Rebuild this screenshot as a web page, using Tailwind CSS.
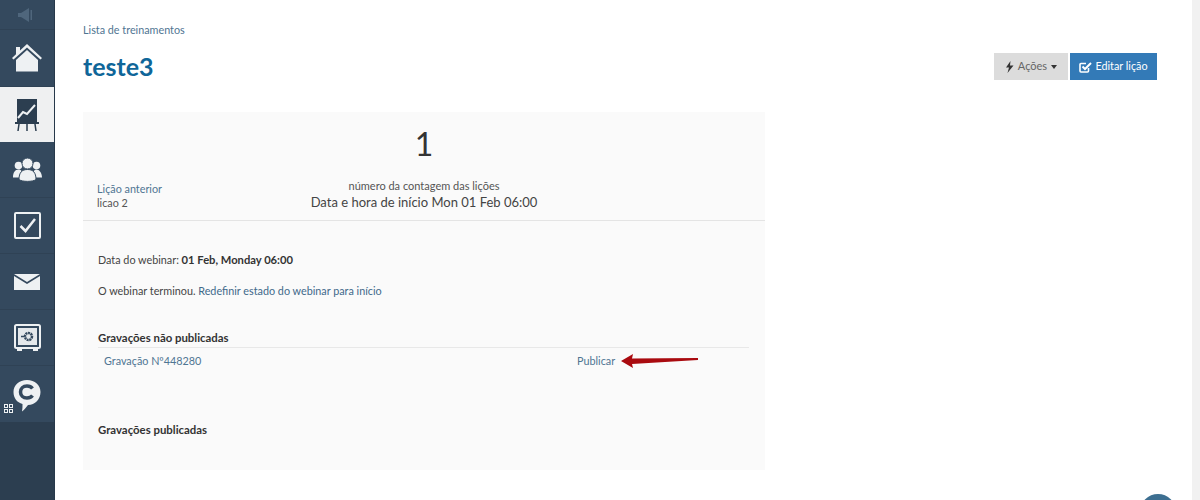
<!DOCTYPE html>
<html lang="pt">
<head>
<meta charset="UTF-8">
<title>teste3</title>
<script src="https://cdn.jsdelivr.net/npm/@tailwindcss/browser@4"></script>
</head>
<body class="font-['Lato','Liberation_Sans',sans-serif] bg-white text-[#333] overflow-hidden">
<div class="relative flex h-[500px] w-[1200px] overflow-hidden">

  <!-- sidebar -->
  <nav class="flex flex-col w-[55px] h-full shrink-0 bg-[#2c3e50] border-r border-[#27384a]">
    <a class="flex items-center justify-center h-[30px] bg-[#34495e] border-b border-[#2f4255]">
      <svg width="20" height="14" viewBox="0 0 20 14" fill="#4f667c"><path d="M1 5h3l8-5v14l-8-5H1z"/><rect x="13.500" y="2" width="1.500" height="10"/></svg>
    </a>
    <a class="flex items-center justify-center h-[57px] bg-[#34495e] border-b border-[#2f4255]">
      <svg width="30" height="28" viewBox="0 0 30 28" fill="#eef1f3"><path d="M15 0 30 14l-1.500 1.500L15 3.500 1.500 15.500 0 14 4 10.200V3h4v3.500z"/><path d="M15 6 26 16v11.500H4V16z"/></svg>
    </a>
    <a class="flex items-center justify-center h-[55px] bg-[#eff0f1]">
      <svg width="24" height="32" viewBox="0 0 24 32"><rect x="2" y="0" width="20" height="23" fill="#2c3e50"/><path d="M3 19l5-6 4 2 8-9" fill="none" stroke="#eef1f3" stroke-width="2"/><rect x="0" y="23" width="24" height="2" fill="#2c3e50"/><path d="M4 25 3 32M12 25v7M20 25l1 7" stroke="#2c3e50" stroke-width="1.500"/></svg>
    </a>
    <a class="flex items-center justify-center h-[56px] bg-[#34495e] border-b border-[#2f4255]">
      <svg width="29" height="25" viewBox="0 0 29 24" fill="#eef1f3"><circle cx="5.500" cy="8" r="3.800"/><circle cx="23.500" cy="8" r="3.800"/><path d="M0 20c0-5 2-8 5.500-8S9 14 9 20zM20 20c0-6 1-8 3.500-8S29 15 29 20z"/><circle cx="14.500" cy="6" r="5.500" stroke="#34495e"/><path d="M6 22c0-7 3-10 8.500-10S23 15 23 22c-3 2.500-14 2.500-17 0z" stroke="#34495e"/></svg>
    </a>
    <a class="flex items-center justify-center h-[56px] bg-[#34495e] border-b border-[#2f4255]">
      <svg width="27" height="27" viewBox="0 0 27 27" fill="none" stroke="#eef1f3"><rect x="1" y="1" width="25" height="25" rx="1" stroke-width="2"/><path d="M6.500 14l5 5L21 7" stroke-width="2.500"/></svg>
    </a>
    <a class="flex items-center justify-center h-[56px] bg-[#34495e] border-b border-[#2f4255]">
      <svg width="26" height="16" viewBox="0 0 26 16" fill="#eef1f3"><path d="M0 0h26L13 8z"/><path d="M0 2l13 8 13-8v14H0z"/></svg>
    </a>
    <a class="flex items-center justify-center h-[56px] bg-[#34495e] border-b border-[#2f4255]">
      <svg width="27" height="27" viewBox="0 0 27 27"><rect x="1" y="1" width="25" height="23" rx="1.500" fill="#34495e" stroke="#eef1f3" stroke-width="2"/><rect x="4" y="4" width="19" height="17" fill="#e4e8eb"/><circle cx="14.500" cy="12.500" r="3.500" fill="none" stroke="#34495e" stroke-width="2.500" stroke-dasharray="2 .6"/><path d="M7 12.500h3" stroke="#34495e" stroke-width="1.500"/><path d="M3 25h5v2H3zM19 25h5v2h-5z" fill="#eef1f3"/></svg>
    </a>
    <a class="relative flex items-start justify-center h-[56px] pt-[13px] bg-[#34495e]">
      <svg width="28" height="33" viewBox="0 0 28 33"><path d="M14 1c8 0 13.500 5 13.500 12S22 26 15 26c-1.500 2-3.500 4.500-6 6.500 .5-2.500 .5-5 .5-7.500C4 23.500 .5 19 .5 13 .5 6 6 1 14 1z" fill="#eef1f3"/><path d="M19.500 9.500C18 7.500 16 7 14 7c-4 0-6.500 2.500-6.500 6s2.500 6 6.500 6c2 0 4-.5 5.500-2.500" fill="none" stroke="#34495e" stroke-width="3.500"/></svg>
      <svg class="absolute left-[4px] top-[38px]" width="9" height="9" viewBox="0 0 9 9" fill="none" stroke="#eef1f3"><rect x=".5" y=".5" width="3" height="3"/><rect x="5.500" y=".5" width="3" height="3"/><rect x=".5" y="5.500" width="3" height="3"/><rect x="5.500" y="5.500" width="3" height="3"/></svg>
    </a>
  </nav>

  <!-- main -->
  <main class="flex-1 pl-[28px] pr-[43px] pt-[22px]">
    <p class="text-[10.8px] leading-[15px] text-[#4f7592]">Lista de treinamentos</p>
    <div class="flex items-start justify-between mt-[9px] h-[66px]">
      <h1 class="text-[25px] leading-[30px] font-bold text-[#0f6699] mt-[5px]">teste3</h1>
      <div class="flex gap-[2px] mt-[7px]">
        <button class="flex items-center gap-[4px] h-[27px] w-[74px] justify-center bg-[#dcdcdc] text-[11px] text-[#666]">
          <svg width="9" height="12" viewBox="0 0 9 12" fill="#333"><path d="M5.500 0 1 6.500h3L2.500 12 8.500 4.500H5z"/></svg>
          Ações
          <span class="w-0 h-0 border-x-[3.500px] border-x-transparent border-t-[4px] border-t-[#333]"></span>
        </button>
        <button class="flex items-center gap-[3px] h-[27px] w-[87px] justify-center bg-[#337ab7] text-[10.8px] text-white">
          <svg width="13" height="12" viewBox="0 0 13 12" fill="none" stroke="#fff"><path d="M9.500 7v3a1 1 0 0 1-1 1H2a1 1 0 0 1-1-1V3.500a1 1 0 0 1 1-1h5" stroke-width="1.600"/><path d="M3.500 5.500l2.500 2.500 6-6" stroke-width="2"/></svg>
          Editar lição
        </button>
      </div>
    </div>

    <section class="w-[682px] h-[358px] bg-[#fafafa]">
      <div class="relative h-[109px] border-b border-[#e4e4e4] pt-[12px] text-center">
        <div class="text-[32px] leading-[40px] text-[#333]">1</div>
        <p class="mt-[14px] text-[11px] leading-[15px] text-[#555]">número da contagem das lições</p>
        <p class="mt-[0px] text-[13px] leading-[18px] text-[#444]">Data e hora de início Mon 01 Feb 06:00</p>
        <div class="absolute left-[14px] top-[70px] text-left text-[10.8px] leading-[14px]">
          <a class="block text-[#4f7592]">Lição anterior</a>
          <span class="block text-[#555]">licao 2</span>
        </div>
      </div>

      <div class="pt-[31px] pl-[15px] pr-[16px] text-[10.8px] text-[#444]">
        <p class="leading-[15px]">Data do webinar: <b class="text-[11.2px] text-[#333]">01 Feb, Monday 06:00</b></p>
        <p class="mt-[16px] leading-[15px]">O webinar terminou. <a class="text-[#41698a]">Redefinir estado do webinar para início</a></p>

        <h2 class="mt-[32px] text-[11.4px] font-bold leading-[15px] text-[#333]">Gravações não publicadas</h2>
        <div class="relative flex mt-[2px] pt-[5px] pl-[6px] border-t border-[#e8e8e8] leading-[15px] text-[#4f7592]">
          <a class="w-[473px]">Gravação Nº448280</a>
          <a>Publicar</a>
          <svg class="absolute left-[523px] top-[5px]" width="78" height="16" viewBox="0 0 78 16" fill="#a90a0f"><path d="M0 8 12 1l-1 4.500L77 5v2L11 11l1 4z"/></svg>
        </div>

        <h2 class="mt-[54px] text-[11.4px] font-bold leading-[15px] text-[#333]">Gravações publicadas</h2>
      </div>
    </section>
  </main>

  <div class="absolute right-0 top-0 h-full w-[8px] bg-[#f1f1f1]"></div>
  <div class="absolute left-[1140px] top-[494px] w-[36px] h-[36px] rounded-full bg-[#3d6f91]"></div>
</div>
</body>
</html>
